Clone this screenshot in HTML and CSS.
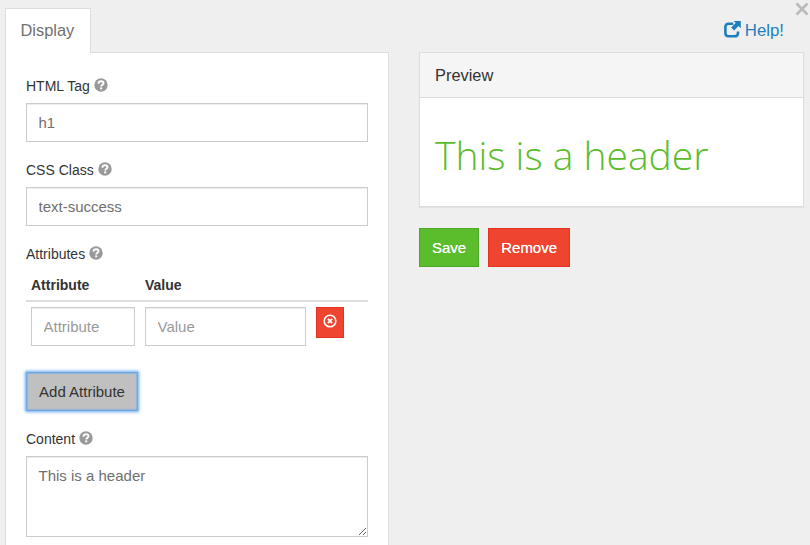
FILE: index.html
```html
<!DOCTYPE html>
<html lang="en">
<head>
<meta charset="utf-8">
<title>Display</title>
<link rel="stylesheet" href="styles.css">
</head>
<body>
<svg width="0" height="0" class="defs">
  <defs>
    <symbol id="question" viewBox="0 0 14 14">
      <circle cx="7" cy="7" r="6.7" fill="#999"/>
      <path d="M4.500 5.700C4.500 3.900 5.500 3.300 7.100 3.300C8.700 3.300 9.500 4 9.500 5.200C9.500 6.800 7.200 6.700 7.200 8.500" fill="none" stroke="#fff" stroke-width="1.900"/>
      <path d="M6.200 9.400h2v1.900h-2z" fill="#fff"/>
    </symbol>
  </defs>
</svg>
<button class="close" aria-label="Close"><svg width="14" height="14" viewBox="0 0 14 14"><path d="M1.500 1.500l11 11M12.500 1.500l-11 11" stroke="#bababa" stroke-width="2.500"/></svg></button>
<main class="layout">
  <section class="editor">
    <div class="tabs"><div class="tab">Display</div></div>
    <form class="pane">
      <label class="label" for="tag">HTML Tag <svg class="hint"><use href="#question"/></svg></label>
      <input class="control" id="tag" value="h1">
      <label class="label" for="css">CSS Class <svg class="hint"><use href="#question"/></svg></label>
      <input class="control" id="css" value="text-success">
      <div class="label">Attributes <svg class="hint"><use href="#question"/></svg></div>
      <div class="attrs">
        <div class="row head"><span>Attribute</span><span>Value</span></div>
        <div class="row">
          <input class="control" placeholder="Attribute">
          <input class="control" placeholder="Value">
          <button type="button" class="btn danger small" aria-label="Remove"><svg width="14" height="14" viewBox="0 0 14 14"><circle cx="7" cy="7" r="5.800" fill="none" stroke="#fff" stroke-width="1.600"/><path d="M4.900 4.900l4.200 4.200M9.100 4.900l-4.200 4.200" stroke="#fff" stroke-width="1.900"/></svg></button>
        </div>
      </div>
      <button type="button" class="btn add">Add Attribute</button>
      <label class="label" for="content">Content <svg class="hint"><use href="#question"/></svg></label>
      <textarea class="control area" id="content">This is a header</textarea>
    </form>
  </section>
  <section class="side">
    <a class="help"><svg width="17" height="17" viewBox="0 0 17 17"><path d="M9.300 2.700H4.500Q1.400 2.700 1.400 6V12Q1.400 15.300 4.500 15.300H10.600Q14 15.300 14 12V10.500" fill="none" stroke="#1d7fc0" stroke-width="2.600"/><path d="M9.600 0H16.800V7.200L14.500 5L10.100 9.400L7.200 6.500L11.700 2.100Z" fill="#1d7fc0"/></svg>Help!</a>
    <div class="panel">
      <div class="panel-head">Preview</div>
      <div class="panel-body"><h1>This is a header</h1></div>
    </div>
    <div class="actions">
      <button class="btn success">Save</button>
      <button class="btn danger">Remove</button>
    </div>
  </section>
</main>
</body>
</html>
```
FILE: styles.css
```css
* { box-sizing: border-box; }
body {
  margin: 0;
  height: 545px;
  overflow: hidden;
  background: #efefef;
  color: #333;
  font: 15px/21px "Liberation Sans", Arial, sans-serif;
}
.defs { position: absolute; }
.close {
  position: absolute;
  top: 2px;
  right: 1px;
  padding: 0;
  border: 0;
  background: none;
  line-height: 0;
}
.layout { display: flex; gap: 30px; padding: 8px 6px 0 5px; }
.editor { width: 384px; }
.tabs { display: flex; }
.tab {
  position: relative;
  z-index: 1;
  height: 45px;
  width: 86px;
  margin-bottom: -1px;
  padding: 11px 14.5px;
  border: 1px solid #ddd;
  border-bottom: 0;
  background: #fff;
  color: #6f6f6f;
  font-size: 16.4px;
}
.pane {
  height: 520px;
  padding: 23px 20px 0;
  border: 1px solid #ddd;
  background: #fff;
}
.label {
  display: flex;
  align-items: center;
  gap: 4px;
  height: 20px;
  margin-bottom: 7px;
  font-size: 14px;
  line-height: 20px;
}
.hint { width: 14px; height: 14px; margin-top: -3px; }
.control {
  display: block;
  width: 100%;
  height: 39px;
  margin: 0 0 18px;
  padding: 8px 11.5px;
  border: 1px solid #ccc;
  border-radius: 0;
  background: #fff;
  box-shadow: inset 0 1px 1px rgba(0, 0, 0, .075);
  color: #6f6f6f;
  font: 15px/21px "Liberation Sans", Arial, sans-serif;
}
.control::placeholder { color: #999; }
.attrs { margin-bottom: 26px; }
.row {
  display: grid;
  grid-template-columns: 104px 161px 28px;
  column-gap: 10px;
  align-items: start;
  padding: 5px 5px 0;
}
.row .control { margin: 0; }
.head {
  height: 38px;
  margin-top: -7px;
  padding-top: 11px;
  border-bottom: 2px solid #ddd;
  font-size: 14px;
  font-weight: bold;
}
.btn {
  height: 39px;
  padding: 0 12px;
  border: 1px solid;
  font: 15px/21px "Liberation Sans", Arial, sans-serif;
  color: #fff;
}
.small { height: 31px; padding: 0 0 3px 0; line-height: 0; }
.success { background: #5bbd2c; border-color: #4da823; }
.danger { background: #ef4430; border-color: #e53220; }
.small svg { vertical-align: middle; }
.add {
  display: block;
  width: 112px;
  margin: 0 0 18px;
  padding: 0;
  background: #c0c0c0;
  border-color: #70a8e0;
  box-shadow: 0 0 3px 1px #64a9ee, inset 0 0 1px 1px #8fb3d8;
  color: #333;
}
.area { height: 81px; margin: 0; resize: both; }
.side { width: 385px; }
.help {
  display: flex;
  justify-content: flex-end;
  align-items: center;
  gap: 4px;
  height: 44px;
  padding-right: 20px;
  color: #1d7fc0;
  font-size: 16.8px;
}
.help svg { margin-top: -2px; }
.panel {
  border: 1px solid #ddd;
  background: #fff;
  box-shadow: 0 1px 1px rgba(0, 0, 0, .05);
}
.panel-head {
  height: 45px;
  padding: 12px 15px;
  border-bottom: 1px solid #ddd;
  background: #f5f5f5;
  font-size: 16.4px;
}
.panel-body { height: 108px; padding: 35px 15px 0; }
h1 {
  margin: 0;
  color: #5bbd2c;
  font: 300 39px/44px "Open Sans", sans-serif;
}
.actions { display: flex; gap: 9px; margin-top: 21px; }
.actions .btn { text-shadow: 0 0 0.5px #fff; }
```
